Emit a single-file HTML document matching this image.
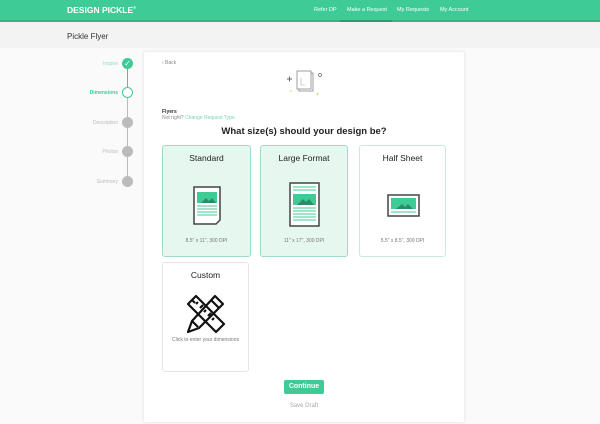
<!DOCTYPE html>
<html><head><style>
*{margin:0;padding:0;box-sizing:border-box}
body{width:600px;height:424px;overflow:hidden;background:#fafafa;font-family:"Liberation Sans",sans-serif;position:relative}
.nav{position:absolute;top:0;left:0;width:600px;height:22px;background:#3fcb96;border-bottom:2px solid #36b383}
.logo{position:absolute;left:67px;top:5px;color:#fff;font-weight:bold;font-size:8.5px;letter-spacing:0}
.nl{position:absolute;top:7px;color:#fff;font-size:5.5px}
.band{position:absolute;top:22px;left:0;width:600px;height:26px;background:#f3f3f3}
.title{position:absolute;left:67px;top:32px;font-size:8px;color:#333}
.card{position:absolute;left:144px;top:52px;width:320px;height:370px;background:#fff;box-shadow:0 0 3px rgba(0,0,0,.12)}
.opt{position:absolute;border:1px solid #9fdcc3;border-radius:3px;background:#e6f7f0;text-align:center}
.opt.w{background:#fff;border-color:#cde9de}
.opt h4{font-size:8.5px;font-weight:normal;color:#222;margin-top:7px}
.opt p{position:absolute;left:0;right:0;bottom:12px;font-size:5px;color:#777}
.c{position:absolute;width:11px;height:11px;border-radius:50%;left:122px;background:#bbb}
.lb{position:absolute;right:482px;font-size:5px;color:#bbb}
</style></head><body>
<div class="nav"><div class="logo">DESIGN PICKLE<sup style="font-size:4px">®</sup></div>
<div class="nl" style="left:314px">Refer DP</div>
<div class="nl" style="left:347px">Make a Request</div>
<div class="nl" style="left:397px">My Requests</div>
<div class="nl" style="left:440px">My Account</div>
<div style="position:absolute;left:340px;top:20px;width:52px;height:2px;background:#2a9c72"></div></div>
<div class="band"></div><div class="title">Pickle Flyer</div>
<div style="position:absolute;left:127px;top:64px;width:1px;height:118px;background:#bbb"></div>
<div style="position:absolute;left:127px;top:64px;width:1px;height:28px;background:#3fcb96"></div>
<div class="c" style="top:58px;background:#3fcb96;color:#fff;font-size:8px;text-align:center;line-height:11px">✓</div>
<div class="c" style="top:87px;background:#fff;border:1px solid #3fcb96"></div>
<div class="c" style="top:117px"></div><div class="c" style="top:146px"></div><div class="c" style="top:176px"></div>
<div class="lb" style="top:61px;color:#8fdcbc">Inspire</div>
<div class="lb" style="top:90px;color:#3fcb96;font-weight:bold">Dimensions</div>
<div class="lb" style="top:120px">Description</div>
<div class="lb" style="top:149px">Photos</div>
<div class="lb" style="top:179px">Summary</div>
<div class="card">
<div style="position:absolute;left:18px;top:8px;font-size:5px;color:#888">‹ Back</div>
<svg style="position:absolute;left:138px;top:16px" width="45" height="32" viewBox="0 0 45 32"><path d="M5 11h5M7.5 8.5v5" stroke="#666"/><rect x="17" y="5" width="14" height="18" fill="#fff" stroke="#888" stroke-width=".8"/><rect x="15" y="3" width="14" height="18" fill="#fff" stroke="#888" stroke-width=".8"/><path d="M19 10v7h4" stroke="#aaa" stroke-width=".6" fill="none"/><circle cx="38" cy="7" r="1.5" fill="none" stroke="#666" stroke-width=".7"/><circle cx="9" cy="23" r=".8" fill="#e0d060"/><path d="M34 26h3M35.5 24.5v3" stroke="#cbe08a" stroke-width=".7"/></svg>
<div style="position:absolute;left:18px;top:57px;font-size:5px;color:#333;font-weight:bold">Flyers</div>
<div style="position:absolute;left:18px;top:63px;font-size:5px;color:#888">Not right? <span style="color:#7dd3b0">Change Request Type</span></div>
<div style="position:absolute;left:0;right:0;top:74px;text-align:center;font-size:9.5px;font-weight:bold;color:#222">What size(s) should your design be?</div>
<div class="opt" style="left:18px;top:93px;width:89px;height:112px"><h4>Standard</h4>
<svg style="position:absolute;left:30px;top:40px" width="30" height="40"><path d="M1 1h26v33l-4 4H1z" fill="#fff" stroke="#444" stroke-width="1.5"/><rect x="4" y="6" width="20" height="11" fill="#3fcb96"/><path d="M8 17l5-5 3 3 3-3 4 5z" fill="#2a8c6a"/><path d="M4 20h20M4 23h20M4 26h20M4 29h20" stroke="#3fcb96"/></svg><p>8.5" x 11", 300 DPI</p></div>
<div class="opt" style="left:116px;top:93px;width:88px;height:112px"><h4>Large Format</h4>
<svg style="position:absolute;left:28px;top:36px" width="32" height="46"><rect x="1" y="1" width="29" height="43" fill="#fff" stroke="#444" stroke-width="1.5"/><path d="M4 5h23M4 8h23" stroke="#3fcb96"/><rect x="4" y="12" width="23" height="11" fill="#3fcb96"/><path d="M8 23l6-6 3 3 3-3 5 6z" fill="#2a8c6a"/><path d="M4 26h23M4 29h23M4 32h23M4 35h23M4 38h23" stroke="#3fcb96"/></svg><p>11" x 17", 300 DPI</p></div>
<div class="opt w" style="left:215px;top:93px;width:87px;height:112px"><h4>Half Sheet</h4>
<svg style="position:absolute;left:27px;top:48px" width="34" height="24"><rect x="1" y="1" width="31" height="21" fill="#fff" stroke="#444" stroke-width="1.5"/><rect x="4" y="4" width="25" height="11" fill="#3fcb96"/><path d="M9 15l6-5 3 3 3-3 5 5z" fill="#2a8c6a"/><path d="M4 18h25" stroke="#3fcb96"/></svg><p>5.5" x 8.5", 300 DPI</p></div>
<div class="opt w" style="left:18px;top:210px;width:87px;height:110px;border-color:#e4e4e4"><h4>Custom</h4>
<svg style="position:absolute;left:22px;top:30px" width="42" height="42" viewBox="0 0 42 42" fill="none" stroke="#111" stroke-width="2.2" stroke-linejoin="round"><path d="M3 11l8-8 28 28-8 8z"/><path d="M7 7l3 3M11 11l2-2M15 15l3-3M19 19l2-2M23 23l3-3M27 27l2-2"/><path d="M30 3l8 8-24 24-11 4 4-11z"/><path d="M26 7l8 8M7 28l6 6"/></svg><p style="bottom:28px">Click to enter your dimensions</p></div>
<div style="position:absolute;left:140px;top:328px;width:40px;height:14px;background:#3fcb96;border-radius:2px;color:#fff;font-size:7px;font-weight:bold;text-align:center;line-height:14px">Continue</div>
<div style="position:absolute;left:0;right:0;top:351px;text-align:center;font-size:6px;color:#aaa">Save Draft</div>
</div>
</body></html>
